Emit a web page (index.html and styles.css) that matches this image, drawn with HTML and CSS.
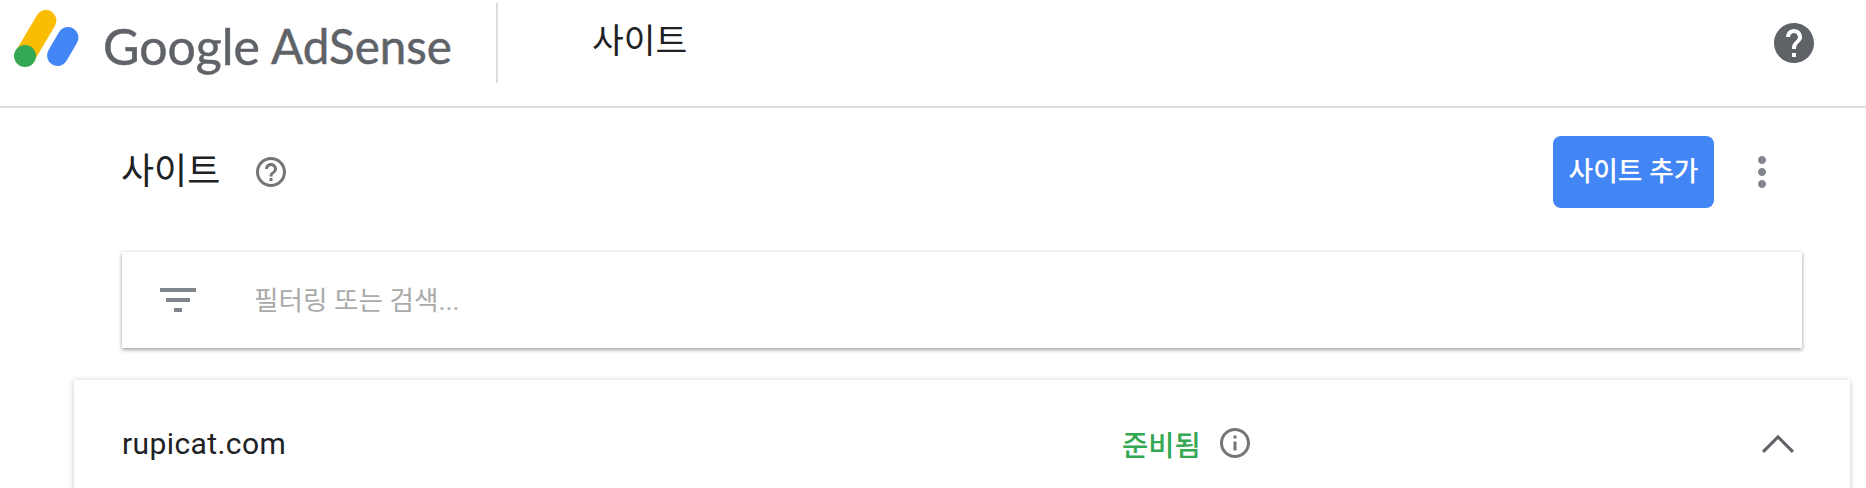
FILE: index.html
```html
<!DOCTYPE html>
<html lang="ko">
<head>
<meta charset="utf-8">
<title>사이트</title>
<link rel="stylesheet" href="styles.css">
</head>
<body>
<header class="topbar">
  <svg class="logo-mark" viewBox="0 0 84 84" width="84" height="84" aria-hidden="true">
    <path d="M46 20.5 25 56" stroke="#fbbc04" stroke-width="21" stroke-linecap="round"/>
    <path d="M68 37.500 57.500 55.500" stroke="#4285f4" stroke-width="21" stroke-linecap="round"/>
    <circle cx="25" cy="56" r="11" fill="#34a853"/>
  </svg>
  <div class="wordmark"><span class="wm-google">Google</span><span class="wm-adsense">AdSense</span></div>
  <div class="divider"></div>
  <div class="top-title">사이트</div>
  <svg class="top-help" viewBox="0 0 24 24" width="48" height="48" aria-hidden="true"><path fill="#5f6368" d="M12 2C6.48 2 2 6.48 2 12s4.480 10 10 10 10-4.480 10-10S17.520 2 12 2zm1 17h-2v-2h2v2zm2.070-7.750-.9.920C13.450 12.900 13 13.500 13 15h-2v-.5c0-1.100.45-2.100 1.170-2.830l1.240-1.260c.37-.36.590-.86.590-1.410 0-1.100-.9-2-2-2s-2 .9-2 2H8c0-2.210 1.790-4 4-4s4 1.790 4 4c0 .88-.36 1.680-.93 2.250z"/></svg>
</header>
<main class="main">
  <section class="page-head">
    <h1 class="page-title">사이트</h1>
    <svg class="head-help" viewBox="0 0 24 24" width="36" height="36" aria-hidden="true"><path fill="#757575" d="M11 18h2v-2h-2v2zm1-16C6.480 2 2 6.480 2 12s4.480 10 10 10 10-4.480 10-10S17.520 2 12 2zm0 18c-4.410 0-8-3.590-8-8s3.590-8 8-8 8 3.590 8 8-3.590 8-8 8zm0-14c-2.210 0-4 1.790-4 4h2c0-1.100.9-2 2-2s2 .9 2 2c0 2-3 1.750-3 5h2c0-2.250 3-2.500 3-5 0-2.210-1.790-4-4-4z"/></svg>
    <button class="add-btn" type="button">사이트 추가</button>
    <svg class="more" viewBox="0 0 24 24" width="48" height="48" aria-hidden="true"><path fill="#80868b" d="M12 8c1.100 0 2-.9 2-2s-.9-2-2-2-2 .9-2 2 .9 2 2 2zm0 2c-1.100 0-2 .9-2 2s.9 2 2 2 2-.9 2-2-.9-2-2-2zm0 6c-1.100 0-2 .9-2 2s.9 2 2 2 2-.9 2-2-.9-2-2-2z"/></svg>
  </section>
  <section class="filter">
    <svg class="filter-icon" viewBox="0 0 24 24" width="48" height="48" aria-hidden="true"><path fill="#80868b" d="M10 18h4v-2h-4v2zM3 6v2h18V6H3zm3 7h12v-2H6v2z"/></svg>
    <span class="filter-text">필터링 또는 검색...</span>
  </section>
  <section class="site-card">
    <div class="site-row">
      <div class="site-name">rupicat.com</div>
      <div class="site-status">
        <span class="status-text">준비됨</span>
        <svg class="status-info" viewBox="0 0 24 24" width="36" height="36" aria-hidden="true"><path fill="#757575" d="M11 7h2v2h-2V7zm0 4h2v6h-2v-6zm1-9C6.480 2 2 6.480 2 12s4.480 10 10 10 10-4.480 10-10S17.520 2 12 2zm0 18c-4.410 0-8-3.590-8-8s3.590-8 8-8 8 3.590 8 8-3.590 8-8 8z"/></svg>
      </div>
      <svg class="chevron" viewBox="0 0 24 24" width="64" height="64" aria-hidden="true"><path fill="none" stroke="#5f6368" stroke-width="1.150" d="M6.400 15.300 12 9.700l5.600 5.600"/></svg>
    </div>
  </section>
</main>
</body>
</html>
```
FILE: styles.css
```css
* { box-sizing: border-box; }
html, body { margin: 0; height: 488px; overflow: hidden; background: #fff; }
body { font-family: Roboto, "Noto Sans CJK KR", sans-serif; color: #202124; }

.topbar { height: 108px; display: flex; align-items: flex-start; border-bottom: 2px solid #dadce0; background: #fff; padding-right: 48px; }
.logo-mark { flex: none; }
.wordmark { display: flex; gap: 11px; margin-left: 19px; margin-top: 13px; font-family: Lato, sans-serif; font-size: 50px; line-height: 66px; color: #5f6368; width: 393px; -webkit-text-stroke: .5px #5f6368; }
.wm-adsense { font-size: 47.5px; }
.divider { width: 2px; height: 80px; margin-top: 3px; background: #dadce0; flex: none; }
.top-title { margin-left: 94px; margin-top: 17px; font-size: 34.500px; line-height: 48px; color: #202124; flex: 1; }
.top-help { flex: none; margin-top: 19px; }

.main { display: flex; flex-direction: column; }
.page-head { display: flex; align-items: center; height: 72px; margin-top: 28px; padding: 0 80px 0 121px; }
.page-title { margin: 0; font-size: 36px; font-weight: 400; line-height: 48px; color: #202124; }
.head-help { margin-left: 33px; flex: none; }
.add-btn { margin-left: auto; width: 161px; height: 72px; border: 0; border-radius: 8px; background: #4285f4; color: #fff; font: 500 26.800px/32px Roboto, "Noto Sans CJK KR", sans-serif; padding: 0; }
.more { margin-left: 24px; flex: none; }

.filter { display: flex; align-items: center; height: 96px; margin: 44px 64px 0 122px; background: #fff; box-shadow: 0 2px 4px rgba(60,64,67,.45), 0 0 3px rgba(60,64,67,.12); padding-left: 32px; }
.filter-text { margin-left: 52px; padding-bottom: 4px; font-size: 26.600px; color: #aaaaaa; }

.site-card { height: 130px; margin: 32px 16px 0 74px; background: #fff; box-shadow: 0 1px 6px rgba(60,64,67,.3); padding: 0 40px 0 48px; }
.site-row { display: flex; align-items: center; height: 126px; }
.site-name { font-size: 30px; letter-spacing: .4px; color: #202124; width: 1000px; }
.site-status { display: flex; align-items: center; }
.status-text { font-size: 28.500px; font-weight: 500; color: #34a853; }
.status-info { margin-left: 16px; flex: none; }
.chevron { margin-left: auto; flex: none; }
```
